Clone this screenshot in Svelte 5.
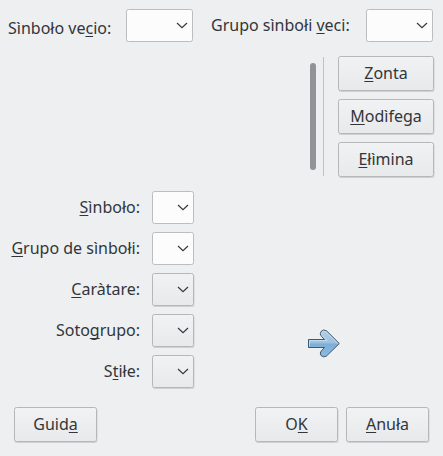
<script>
  const fields = [
    { before: '', key: 'S', after: 'ìnboło:', editable: true },
    { before: '', key: 'G', after: 'rupo de sìnbołi:', editable: true },
    { before: '', key: 'C', after: 'aràtare:', editable: false },
    { before: 'Soto', key: 'g', after: 'rupo:', editable: false },
    { before: 'S', key: 't', after: 'iłe:', editable: false }
  ];
  const actions = [
    { before: '', key: 'Z', after: 'onta' },
    { before: '', key: 'M', after: 'odìfega' },
    { before: '', key: 'E', after: 'łìmina' }
  ];
</script>

{#snippet mnemonic(t)}<span class="text">{t.before}<u>{t.key}</u>{t.after}</span>{/snippet}

{#snippet chevron()}
  <svg class="chevron" width="12" height="7" viewBox="0 0 12 7">
    <path d="M1 1 L6 5.6 L11 1" fill="none" stroke="#31363b" stroke-width="1.15" />
  </svg>
{/snippet}

<main>
  <div class="top">
    <div class="label old">{@render mnemonic({ before: 'Sìnboło ve', key: 'c', after: 'io:' })}</div>
    <div class="combo wide">{@render chevron()}</div>
    <div class="label group">{@render mnemonic({ before: 'Grupo sìnbołi ', key: 'v', after: 'eci:' })}</div>
    <div class="combo wide">{@render chevron()}</div>
  </div>

  <div class="middle">
    <div class="scrollbar"></div>
    <div class="divider"></div>
    <div class="actions">
      {#each actions as action}
        <button>{@render mnemonic(action)}</button>
      {/each}
    </div>
  </div>

  <div class="details">
    <div class="fields">
      {#each fields as field}
        <div class="field">
          <div class="label">{@render mnemonic(field)}</div>
          <div class="combo" class:list={!field.editable}>{@render chevron()}</div>
        </div>
      {/each}
    </div>
    <svg class="arrow" width="34" height="32" viewBox="0 0 34 32">
      <defs>
        <linearGradient id="blue" x1="0" y1="0" x2="0" y2="1">
          <stop offset="0" stop-color="#b2d0e8" />
          <stop offset=".48" stop-color="#9ac1e1" />
          <stop offset=".52" stop-color="#7caed6" />
          <stop offset="1" stop-color="#8ebbe0" />
        </linearGradient>
      </defs>
      <path
        d="M1.5 11.5 H17.5 L14.5 8.5 Q12.3 5.7 14 3.5 Q16.5 .8 19.5 2.8 L32.3 15.5 L19.5 28 Q16.5 30 14 27.5 Q12.3 25 14.5 22.5 L17.5 19.5 H1.5 Z"
        fill="url(#blue)" stroke="#40586d" stroke-width="1" stroke-linejoin="round"
      />
      <path
        d="M2.5 18.5 V12.5 H20 L15.4 7.8 Q13.7 5.8 15 4.2 Q16.7 2.5 18.8 3.8 L30.7 15.5"
        fill="none" stroke="#c9dfef" stroke-width=".8"
      />
    </svg>
  </div>

  <footer>
    <button>{@render mnemonic({ before: 'Guid', key: 'a', after: '' })}</button>
    <span class="spacer"></span>
    <button>{@render mnemonic({ before: 'O', key: 'K', after: '' })}</button>
    <button>{@render mnemonic({ before: '', key: 'A', after: 'nuła' })}</button>
  </footer>
</main>

<style>
  :global(body) {
    background: #eeeff1;
  }
  main {
    box-sizing: border-box;
    width: 443px;
    height: 456px;
    overflow: hidden;
    background: #eeeff1;
    color: #31363b;
    font: 16px/22px 'Noto Sans', sans-serif;
  }
  .text {
    white-space: pre;
  }
  u {
    text-decoration: underline 1px;
    text-underline-offset: 2px;
    text-decoration-skip-ink: none;
  }
  .top {
    display: flex;
    padding: 9px 0 0 8px;
    height: 47px;
  }
  .label {
    flex: none;
  }
  .old {
    width: 118px;
    padding-top: 8px;
  }
  .group {
    width: 155px;
    margin-left: 18px;
    padding-top: 5px;
  }
  .combo {
    box-sizing: border-box;
    flex: none;
    display: flex;
    align-items: center;
    justify-content: flex-end;
    width: 42px;
    height: 33px;
    padding: 0 4px 1px 0;
    border: 1px solid #bbbdbf;
    border-radius: 2.5px;
    background: #fcfcfc;
  }
  .combo.wide {
    width: 67px;
  }
  .combo.list,
  button {
    border: 1px solid #b5b7b9;
    background: linear-gradient(#f1f2f3, #e8e9ea);
    box-shadow: 0.5px 1px 0.5px rgba(0, 0, 0, 0.13);
  }
  .chevron {
    display: block;
  }
  .middle {
    display: flex;
    height: 135px;
    padding-left: 310px;
  }
  .scrollbar {
    width: 6px;
    height: 107px;
    margin-top: 7px;
    border-radius: 3px;
    background: #909496;
  }
  .divider {
    width: 1px;
    height: 119px;
    margin: 1px 14px 0 7px;
    background: #bfc1c3;
  }
  .actions {
    display: flex;
    flex-direction: column;
    gap: 8px;
    width: 96px;
  }
  button {
    box-sizing: border-box;
    flex: none;
    height: 35px;
    margin: 0;
    padding: 0 0 1px;
    border-radius: 2.5px;
    color: inherit;
    font: inherit;
    text-align: center;
  }
  .details {
    display: flex;
    height: 216px;
  }
  .fields {
    display: flex;
    flex-direction: column;
    gap: 8px;
    width: 194px;
  }
  .field {
    display: flex;
    justify-content: flex-end;
    gap: 12px;
  }
  .field .label {
    padding-top: 5px;
  }
  .arrow {
    margin: 137px 0 0 113px;
  }
  footer {
    display: flex;
    gap: 8px;
    padding: 0 14px;
  }
  footer button {
    width: 83px;
  }
  .spacer {
    flex: 1;
  }
</style>
